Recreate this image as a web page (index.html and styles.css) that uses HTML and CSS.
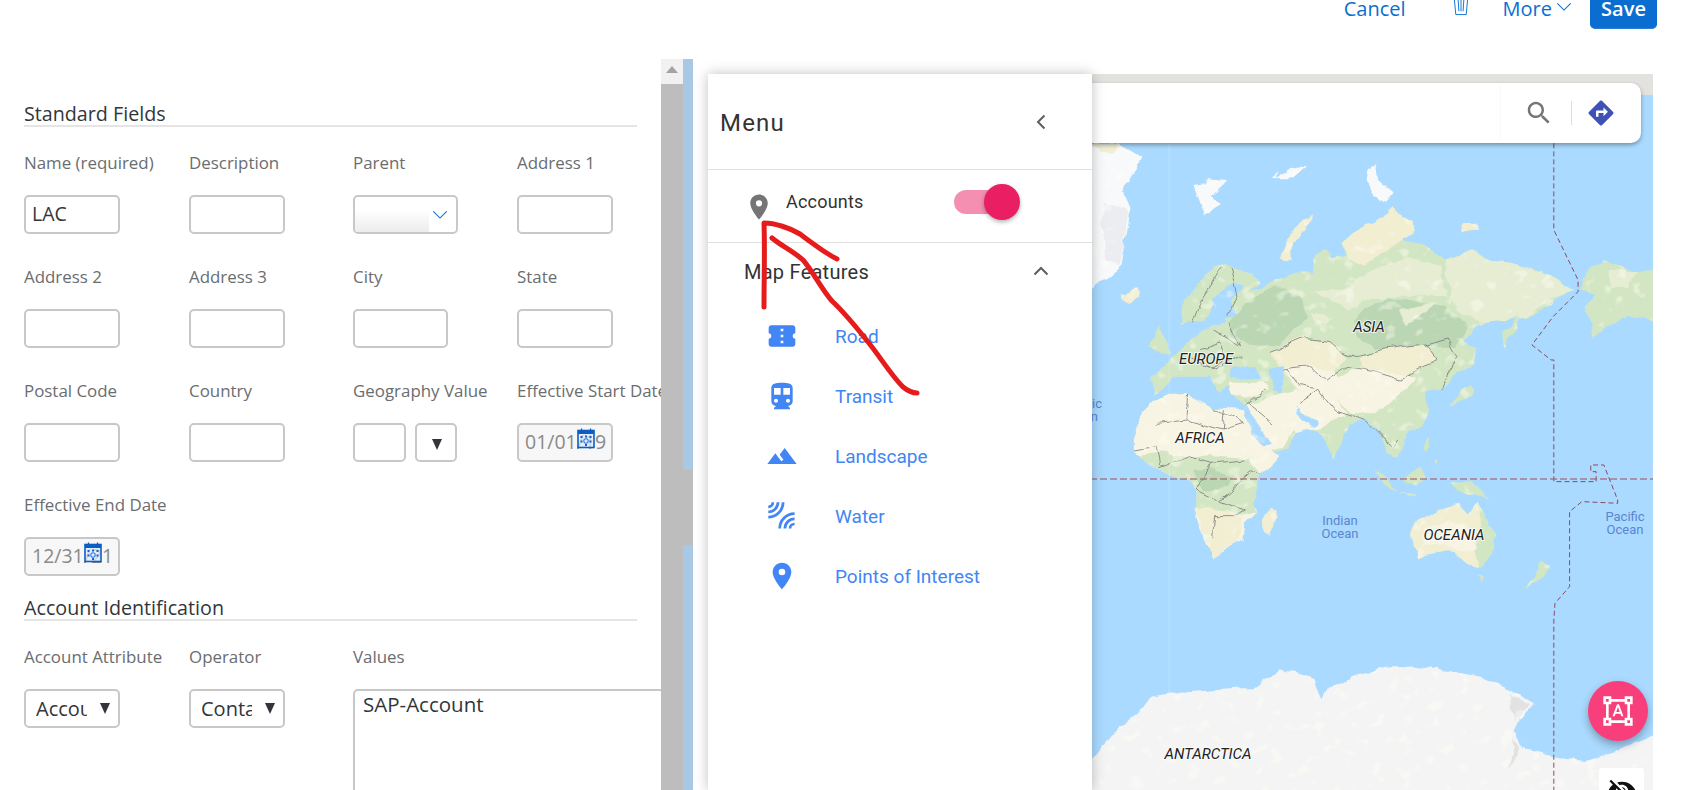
FILE: index.html
```html
<!DOCTYPE html>
<html lang="en">
<head>
<meta charset="utf-8">
<title>Territory</title>
<link rel="stylesheet" href="styles.css">
</head>
<body>
<header class="topbar">
  <a class="act cancel">Cancel</a>
  <svg class="trash" viewBox="0 0 16 18"><path d="M1 0.5 L2.5 16.5 H13.5 L15 0.5 M5 1 L5.8 13 M8 1 V13 M11 1 L10.2 13"/></svg>
  <a class="act more">More</a>
  <svg class="more-chev" viewBox="0 0 16 9"><path d="M0.5 0.5 L8 8 L15.5 0.5"/></svg>
  <button class="save">Save</button>
</header>
<main class="main">
  <section class="pane">
    <div class="form">
      <h2 class="sec">Standard Fields</h2>
      <div class="grid">
        <div class="cell"><div class="lab">Name (required)</div><div class="fld">LAC</div></div>
        <div class="cell"><div class="lab">Description</div><div class="fld"></div></div>
        <div class="cell"><div class="lab">Parent</div><div class="fld parent"><span class="fade"></span><svg class="pchev" viewBox="0 0 16 9"><path d="M0.5 0.5 L8 8 L15.5 0.5"/></svg></div></div>
        <div class="cell"><div class="lab">Address 1</div><div class="fld"></div></div>
        <div class="cell"><div class="lab">Address 2</div><div class="fld"></div></div>
        <div class="cell"><div class="lab">Address 3</div><div class="fld"></div></div>
        <div class="cell"><div class="lab">City</div><div class="fld city"></div></div>
        <div class="cell"><div class="lab">State</div><div class="fld"></div></div>
        <div class="cell"><div class="lab">Postal Code</div><div class="fld"></div></div>
        <div class="cell"><div class="lab">Country</div><div class="fld"></div></div>
        <div class="cell"><div class="lab">Geography Value</div><div class="geo"><div class="fld geo-a"></div><div class="fld geo-b"><span class="tri"></span></div></div></div>
        <div class="cell"><div class="lab">Effective Start Date</div><div class="fld date">01/01/19<svg class="cal" viewBox="0 0 18 20"><use href="#cal"/></svg></div></div>
        <div class="cell"><div class="lab">Effective End Date</div><div class="fld date">12/31/21<svg class="cal" viewBox="0 0 18 20"><use href="#cal"/></svg></div></div>
      </div>
      <h2 class="sec sec2">Account Identification</h2>
      <div class="grid">
        <div class="cell"><div class="lab">Account Attribute</div><div class="fld sel"><span class="clip">Account</span><span class="tri"></span></div></div>
        <div class="cell"><div class="lab">Operator</div><div class="fld sel"><span class="clip">Contains</span><span class="tri"></span></div></div>
        <div class="cell wide"><div class="lab">Values</div><div class="area">SAP-Account</div></div>
      </div>
    </div>
    <div class="sbar"><div class="sbar-top"><span class="sbar-arrow"></span></div><div class="sbar-thumb"></div></div>
  </section>
  <div class="strip"><div class="strip-thumb"></div></div>
  <section class="mapwrap">
    <div class="map">
      <svg class="mapsvg" viewBox="693 74 960 716" preserveAspectRatio="none">
        <defs>
          <filter id="rough" filterUnits="userSpaceOnUse" x="1080" y="74" width="573" height="716" color-interpolation-filters="sRGB">
            <feTurbulence type="fractalNoise" baseFrequency=".045" numOctaves="3" seed="4" result="n"/>
            <feDisplacementMap in="SourceGraphic" in2="n" scale="10" xChannelSelector="R" yChannelSelector="G" result="d"/>
            <feTurbulence type="fractalNoise" baseFrequency=".07 .09" numOctaves="2" seed="9" result="m"/>
            <feColorMatrix in="m" type="matrix" values="0 0 0 0 1  0 0 0 0 1  0 0 0 0 .96  7 0 0 0 -4.2" result="s"/>
            <feComposite in="s" in2="d" operator="in" result="sp"/>
            <feComponentTransfer in="sp" result="spf"><feFuncA type="linear" slope=".4"/></feComponentTransfer>
            <feMerge><feMergeNode in="d"/><feMergeNode in="spf"/></feMerge>
          </filter>
        </defs>
        <rect class="ocean" x="1080" y="74" width="573" height="716"/>
        <rect class="ice-top" x="1080" y="74" width="573" height="21"/>
        <g class="land">
        <g transform="translate(1080 70) scale(.3846 .3333)">
          <polygon class="snow" points="-60,220 105,225 165,265 130,330 110,350 130,430 120,500 105,590 30,660 -60,690"/>
          <polygon class="tan" points="30,225 105,222 85,250 50,255"/>
          <polygon class="snowd" points="60,400 125,430 115,520 100,590 65,570"/>
          <polygon class="tan" points="100,665 150,655 155,680 125,697 105,685"/>
          <polygon class="snow" points="295,345 330,340 335,325 382,330 365,360 340,375 365,405 350,415 325,437 310,390"/>
          <polygon class="snow" points="495,325 515,305 505,325 545,290 590,295 560,325 545,325"/>
          <polygon class="snow" points="745,300 770,285 775,330 815,370 790,402 760,372 740,340"/>
          <polygon class="tan" points="520,565 550,480 610,435 600,455 550,530 550,578"/>
          <polygon class="tan" points="995,460 1030,458 1035,480 1000,490"/>
          <polygon class="g2" points="262,755 268,710 300,660 330,610 375,578 415,600 462,640 440,665 470,655 500,625 570,600 605,612 610,560 635,535 650,565 690,555 680,520 710,490 790,440 810,415 860,450 862,490 840,510 900,525 950,572 1020,540 1080,570 1120,575 1180,595 1240,625 1285,660 1240,680 1225,710 1160,740 1110,745 1060,752 1030,772 1000,812 1015,825 1025,880 985,900 962,932 940,950 895,965 908,1020 890,1072 850,1085 835,1140 825,1165 800,1150 780,1092 745,1050 700,1060 662,1172 640,1120 610,1075 562,1090 540,1140 475,1145 430,1040 420,1000 385,975 380,940 360,970 330,920 240,920 190,975 185,925 220,885 250,850 290,800 345,770 380,760 350,700 325,760 300,760 280,750"/>
          <polygon class="tan" points="710,490 790,440 810,415 860,450 862,490 840,510 800,540 740,590 700,560 680,520"/>
          <polygon class="lite" points="950,572 1020,540 1080,570 1120,575 1180,595 1240,625 1285,660 1240,680 1160,740 1060,752 1000,740 960,680"/>
          <polygon class="lite" points="610,670 700,650 760,600 850,560 940,590 950,680 860,680 760,680 700,720"/>
          <polygon class="dark" points="390,755 440,690 510,645 570,680 590,740 550,790 520,830 430,820 395,800"/>
          <polygon class="dark" points="710,750 790,680 870,700 950,710 1010,770 985,830 900,830 830,850 770,840 720,800"/>
          <polygon class="lite" points="600,730 660,740 640,760 610,750"/>
          <polygon class="lite" points="830,720 930,700 910,720 850,760"/>
          <polygon class="lite" points="1000,660 1080,640 1060,700 1010,700"/>
          <polygon class="tan" points="494,850 580,805 650,815 700,860 660,900 600,890 530,900"/>
          <polygon class="tan2" points="530,895 600,885 660,900 700,950 660,985 690,1030 640,1060 600,1010 560,950"/>
          <polygon class="tan" points="728,860 790,840 900,825 930,870 895,885 830,930 770,910 730,900"/>
          <polygon class="tan2" points="650,940 710,900 800,910 870,920 830,970 770,1030 700,1030 660,985"/>
          <polygon class="tan2" points="385,935 470,935 490,960 430,985 385,975"/>
          <polygon class="tan2" points="430,1000 500,980 560,1075 525,1130 475,1145 440,1060"/>
          <polygon class="tan2" points="500,980 560,955 610,1010 640,1060 610,1075 562,1090"/>
          <polygon class="g2" points="800,1040 860,1010 908,1020 890,1072 850,1085 810,1070"/>
          <polygon class="water" points="350,700 345,680 400,640 425,650 395,690 405,740 380,750 360,740"/>
          <polygon class="water" points="395,895 450,885 470,925 420,925 390,920"/>
          <polygon class="water" points="495,895 530,885 530,970 505,960"/>
          <polygon class="water" points="420,1020 425,1000 500,1120 475,1130"/>
          <polygon class="water" points="560,1010 615,1050 605,1072 575,1040"/>
          <polygon class="g2" points="175,835 205,770 240,845 210,850"/>
          <polygon class="g2" points="1100,790 1140,730 1130,780 1105,845"/>
          <polygon class="g2" points="955,1010 1010,950 1020,970 1000,990 965,1005"/>
          <polygon class="g2" points="1015,825 1030,830 1025,880"/>
          <polygon class="g2" points="1310,625 1360,570 1440,600 1560,595 1560,790 1470,745 1420,735 1335,800 1315,710 1345,680 1300,660"/>
          <polygon class="lite" points="1370,600 1450,600 1430,650 1380,650"/>
          <polygon class="tan2" points="140,1085 180,1000 225,975 280,972 350,1015 420,1020 470,1125 518,1155 470,1222 450,1290 460,1325 430,1360 425,1410 345,1465 320,1410 300,1340 305,1280 285,1230 210,1195 170,1185 140,1140"/>
          <polygon class="g2" points="150,1160 215,1150 280,1165 340,1155 440,1165 470,1222 452,1295 458,1325 400,1340 300,1320 305,1280 285,1230 210,1195 170,1185"/>
          <polygon class="dark" points="290,1200 345,1195 395,1220 385,1250 320,1260"/>
          <polygon class="tan" points="300,1315 385,1325 425,1345 415,1410 345,1465 320,1410"/>
          <polygon class="tan" points="475,1350 500,1310 512,1320 505,1370 490,1395 478,1385"/>
          <polygon class="g2" points="765,1195 800,1220 825,1265 795,1245"/>
          <polygon class="g2" points="840,1220 885,1190 900,1225 870,1250 845,1240"/>
          <polygon class="g2" points="825,1270 865,1280 865,1270"/>
          <polygon class="g2" points="965,1230 1020,1235 1065,1290 1000,1275"/>
          <polygon class="g2" points="895,1130 905,1105 912,1140 900,1145"/>
          <polygon class="g2" points="920,1175 930,1165 932,1185"/>
          <polygon class="tan" points="862,1380 880,1350 930,1320 985,1305 1010,1335 1030,1300 1050,1345 1082,1390 1070,1455 1040,1495 1000,1475 960,1440 900,1455 880,1465 868,1430"/>
          <polygon class="tan2" points="895,1380 960,1350 1030,1380 1030,1440 990,1450 950,1420 900,1425"/>
          <polygon class="g2" points="1030,1300 1050,1345 1082,1390 1070,1455 1045,1495 1030,1440 1040,1380"/>
          <polygon class="g2" points="1040,1515 1055,1515 1048,1535"/>
          <polygon class="g2" points="1195,1475 1220,1495 1210,1515 1160,1560 1180,1525"/>
          <polygon class="ice" points="-60,2090 30,2070 100,1970 170,1910 190,1880 240,1870 420,1855 450,1855 520,1795 610,1825 630,1890 660,1840 780,1795 855,1790 960,1800 1050,1820 1120,1860 1180,1900 1130,1980 1150,2040 1230,2060 1320,2070 1400,2040 1560,1960 1560,2300 -60,2300"/>
          <polygon class="iced" points="1120,1870 1170,1905 1135,1960 1120,1920"/>
          <polygon class="iced" points="1125,2000 1145,2040 1110,2100 1130,2040"/>
          <g class="bord">
            <polyline points="370,590 320,680 295,760"/>
            <polyline points="390,590 410,690 380,740"/>
            <polyline points="350,780 420,830 390,760"/>
            <polyline points="290,870 350,900 420,860"/>
            <polyline points="310,830 360,810 380,870 340,900"/>
            <polyline points="494,850 540,830 590,805 650,815 680,845 720,860 790,840 900,825 930,870 895,885 830,930 770,910 730,900"/>
            <polyline points="530,900 600,890 640,930 690,890 730,900"/>
            <polyline points="570,1000 620,960 660,1020 740,1050 800,1120"/>
            <polyline points="540,900 570,950 620,960"/>
            <polyline points="430,990 470,1030 500,1060"/>
            <polyline points="430,1000 480,960"/>
            <polyline points="200,1060 280,1050 285,975"/>
            <polyline points="280,1050 370,1080 425,1060 350,1015"/>
            <polyline points="370,1080 375,1020"/>
            <polyline points="140,1140 200,1130 210,1190 280,1160 340,1180 430,1170"/>
            <polyline points="340,1180 300,1260 360,1290 430,1320 400,1340 350,1340 345,1400"/>
            <polyline points="360,1290 440,1210 470,1222"/>
            <polyline points="780,1090 810,1130 830,1110"/>
            <polyline points="895,830 960,810 985,860 940,950"/>
          </g>
        </g>
        </g>
        <g transform="translate(1080 70) scale(.3846 .3333)">
          <line class="seam" x1="232" y1="220" x2="232" y2="2160"/>
          <polyline class="idl" points="1232,220 1232,480 1295,630 1295,665 1230,740 1175,825 1225,870 1232,870 1232,1235 1342,1235 1342,1205 1328,1205 1328,1185 1362,1185 1398,1290 1398,1300 1305,1295 1273,1325 1273,1550 1235,1600 1232,1650 1232,2160"/>
          <line class="equator" x1="0" y1="1227" x2="1490" y2="1227"/>
        </g>
        <text class="cont" x="1369" y="332">ASIA</text>
        <text class="cont" x="1206" y="364">EUROPE</text>
        <text class="cont" x="1200" y="443">AFRICA</text>
        <text class="cont" x="1454" y="540">OCEANIA</text>
        <text class="cont" x="1208" y="759">ANTARCTICA</text>
        <text class="sea" x="1340" y="525">Indian</text>
        <text class="sea" x="1340" y="538">Ocean</text>
        <text class="sea" x="1625" y="521">Pacific</text>
        <text class="sea" x="1625" y="534">Ocean</text>
        <text class="sea endt" x="1102" y="408">Atlantic</text>
        <text class="sea endt" x="1098" y="421">Ocean</text>
      </svg>
      <div class="search">
        <span class="seamv"></span>
        <svg class="sicon" viewBox="0 0 24 24"><path d="M15.5 14h-.79l-.28-.27C15.41 12.59 16 11.11 16 9.5 16 5.91 13.09 3 9.5 3S3 5.91 3 9.5 5.91 16 9.5 16c1.61 0 3.09-.59 4.23-1.57l.27.28v.79l5 4.99L20.49 19l-4.99-5zm-6 0C7.01 14 5 11.99 5 9.5S7.01 5 9.5 5 14 7.01 14 9.5 11.99 14 9.5 14z"/></svg>
        <span class="sdiv"></span>
        <svg class="dicon" viewBox="0 0 24 24"><path d="M21.71 11.29l-9-9c-.39-.39-1.02-.39-1.41 0l-9 9c-.39.39-.39 1.02 0 1.41l9 9c.39.39 1.02.39 1.41 0l9-9c.39-.38.39-1.01 0-1.41zM14 14.5V12h-4v3H8v-4c0-.55.45-1 1-1h5V7.5l3.5 3.5-3.5 3.5z"/></svg>
      </div>
      <button class="fab"><svg viewBox="0 0 24 24"><path d="M23 7V1h-6v2H7V1H1v6h2v10H1v6h6v-2h10v2h6v-6h-2V7h2zM3 3h2v2H3V3zm2 18H3v-2h2v2zm12-2H7v-2H5V7h2V5h10v2h2v10h-2v2zm4 2h-2v-2h2v2zM19 5V3h2v2h-2zm-5.27 9h-3.49l-.73 2H7.89l3.4-9h1.4l3.41 9h-1.63l-.74-2zm-3.04-1.26h2.61L12 8.91l-1.31 3.83z"/></svg></button>
      <button class="eye"><svg viewBox="0 0 24 24"><path d="M12 7c2.76 0 5 2.24 5 5 0 .65-.13 1.26-.36 1.83l2.92 2.92c1.51-1.26 2.7-2.89 3.43-4.75-1.73-4.39-6-7.5-11-7.5-1.4 0-2.74.25-3.98.7l2.16 2.16C10.74 7.13 11.35 7 12 7zM2 4.27l2.28 2.28.46.46C3.08 8.3 1.78 10.02 1 12c1.73 4.39 6 7.5 11 7.5 1.55 0 3.03-.3 4.38-.84l.42.42L19.73 22 21 20.73 3.27 3 2 4.27zM7.53 9.8l1.55 1.55c-.05.21-.08.43-.08.65 0 1.66 1.34 3 3 3 .22 0 .44-.03.65-.08l1.55 1.55c-.67.33-1.41.53-2.2.53-2.76 0-5-2.24-5-5 0-.79.2-1.53.53-2.2zm4.31-.78l3.15 3.15.02-.16c0-1.66-1.34-3-3-3l-.17.01z"/></svg></button>
    </div>
    <aside class="menu">
      <div class="mhead"><span class="mtitle">Menu</span><svg class="mchev" viewBox="0 0 10 16"><path d="M8.5 1.5 L2 8 L8.5 14.5"/></svg></div>
      <div class="maccts">
        <svg class="apin" viewBox="0 0 24 24"><path d="M12 2C8.13 2 5 5.13 5 9c0 5.25 7 13 7 13s7-7.75 7-13c0-3.87-3.13-7-7-7zm0 9.5a2.5 2.5 0 0 1 0-5 2.5 2.5 0 0 1 0 5z"/></svg>
        <span class="atext">Accounts</span>
        <span class="toggle"><span class="knob"></span></span>
      </div>
      <div class="mfeat"><span class="mfeat-t">Map Features</span><svg class="fchev" viewBox="0 0 16 10"><path d="M1.5 8.5 L8 2 L14.5 8.5"/></svg></div>
      <ul class="mlist">
        <li><svg class="ic" viewBox="0 0 24 24"><path d="M20 12c0-1.1.9-2 2-2V6c0-1.1-.9-2-2-2H4c-1.1 0-2 .9-2 2v4c1.1 0 2 .9 2 2s-.9 2-2 2v4c0 1.1.9 2 2 2h16c1.1 0 2-.9 2-2v-4c-1.1 0-2-.9-2-2z"/><path class="dots" d="M11 6.5h2v2h-2zM11 11h2v2h-2zM11 15.5h2v2h-2z"/></svg>Road</li>
        <li><svg class="ic" viewBox="0 0 24 24"><path d="M12 2c-4.42 0-8 .5-8 4v10c0 1.93 1.57 3.5 3.5 3.5L6 21v1h12v-1l-1.5-1.5c1.93 0 3.5-1.57 3.5-3.5V6c0-3.5-3.58-4-8-4zM7.5 17c-.83 0-1.5-.67-1.5-1.5S6.67 14 7.5 14s1.5.67 1.5 1.5S8.33 17 7.5 17zm3.5-6H6V6h5v5zm5.5 6c-.83 0-1.5-.67-1.5-1.5s.67-1.5 1.5-1.5 1.5.67 1.5 1.5-.67 1.5-1.5 1.5zm1.5-6h-5V6h5v5z"/></svg>Transit</li>
        <li><svg class="ic" viewBox="0 0 24 24"><path d="M14 6l-3.75 5 2.85 3.8-1.6 1.2C9.81 13.75 7 10 7 10l-6 8h22L14 6z"/></svg>Landscape</li>
        <li><svg class="ic wat" viewBox="-2 -2 28 28"><path d="M4 0A4 4 0 0 1 0 4M8.5 0A8.5 8.5 0 0 1 0 8.5M13 0A13 13 0 0 1 0 13M19 23A4 4 0 0 1 23 19M14.5 23A8.5 8.5 0 0 1 23 14.5M10 23A13 13 0 0 1 23 10"/></svg>Water</li>
        <li><svg class="ic" viewBox="0 0 24 24"><path d="M12 2C8.13 2 5 5.13 5 9c0 5.25 7 13 7 13s7-7.75 7-13c0-3.87-3.13-7-7-7zm0 9.5a2.5 2.5 0 0 1 0-5 2.5 2.5 0 0 1 0 5z"/></svg>Points of Interest</li>
      </ul>
    </aside>
    <svg class="scribble" viewBox="693 59 960 731" preserveAspectRatio="none">
      <path d="M764 307 C764 280 765 250 764 223 C775 223 790 228 800 234 C812 243 825 253 837 259"/>
      <path d="M772 238 C780 245 793 251 803 260 C812 270 822 290 832 301 C848 316 860 332 872 347 C882 360 892 376 903 387 C908 391 912 393 917 393"/>
    </svg>
  </section>
</main>
<svg class="defs" aria-hidden="true"><defs><g id="cal"><rect x="1" y="2" width="16" height="17" fill="#dfeafa" fill-opacity=".75" stroke="#0a5fc4" stroke-width="1.6"/><rect x="1" y="2" width="16" height="3.5" fill="#0a5fc4"/><path d="M4.5 0v3M13.5 0v3" stroke="#0a5fc4" stroke-width="1.3"/><circle cx="9" cy="12.5" r="2.2" fill="none" stroke="#2f7ed8" stroke-width="1.1"/><path d="M3.5 7.5h2v2h-2zM8 7h2v2H8zM12.5 7.5h2v2h-2zM3.5 12h2v2h-2zM12.5 12h2v2h-2zM8 15.5h2v2H8z" fill="#1560c8"/></g></defs></svg>
</body>
</html>
```

FILE: styles.css
```css
* { box-sizing: border-box; }
html, body { height: 100%; }
body {
  margin: 0;
  height: 790px;
  overflow: hidden;
  background: #fff;
  font-family: "Open Sans", "Liberation Sans", sans-serif;
  color: #32363a;
  display: flex;
  flex-direction: column;
}
.topbar {
  height: 59px;
  flex: none;
  display: flex;
  align-items: flex-start;
  justify-content: flex-end;
  padding-right: 26px;
  overflow: hidden;
}
.act { color: #0a6ed1; font-size: 20px; line-height: 24px; margin-top: -3px; }
.cancel { margin-right: 47px; }
.trash { width: 16px; height: 17px; margin-right: 34px; margin-top: -1px; }
.trash path { fill: none; stroke: #0a6ed1; stroke-width: 1; }
.more { margin-right: 4px; }
.more-chev { width: 16px; height: 8px; margin-top: 3px; margin-right: 18px; }
.more-chev path, .pchev path { fill: none; stroke: #0a6ed1; stroke-width: 1.2; }
.save {
  width: 67px;
  height: 36px;
  margin-top: -7px;
  border: 1px solid #0a6ed1;
  border-bottom-color: #2b7fd4;
  border-radius: 5px;
  background: #0a6ed1;
  color: #fff;
  font: 600 20px/26px "Open Sans", sans-serif;
  padding: 0 0 4px;
}
.main { flex: 1; display: flex; min-height: 0; }
.pane { width: 683px; flex: none; display: flex; }
.form { width: 661px; flex: none; padding: 44px 0 0 24px; overflow: hidden; }
.sec {
  margin: 0;
  width: 613px;
  height: 24px;
  border-bottom: 2px solid #e5e5e5;
  font-size: 19.7px;
  font-weight: 400;
  line-height: 21px;
  white-space: nowrap;
}
.sec2 { margin-top: 20px; height: 25px; line-height: 23px; }
.grid {
  display: grid;
  grid-template-columns: 165px 164px 164px 164px;
  row-gap: 33px;
  margin-top: 26px;
}
.lab {
  height: 20px;
  font-size: 16.9px;
  line-height: 20px;
  color: #6a6d70;
  white-space: nowrap;
  margin-bottom: 22px;
}
.fld {
  position: relative;
  width: 96px;
  height: 39px;
  border: 2px solid #c8c8c8;
  border-radius: 5px;
  background: #fff;
  padding-left: 6px;
  font-size: 19.5px;
  line-height: 34px;
  overflow: hidden;
  white-space: nowrap;
}
.parent { width: 105px; }
.city { width: 95px; }
.fade {
  position: absolute;
  left: 0;
  bottom: 0;
  width: 74px;
  height: 22px;
  background: linear-gradient(#fff, #ececec);
}
.pchev { position: absolute; right: 8px; top: 14px; width: 16px; height: 8px; }
.geo { display: flex; gap: 9px; }
.geo-a { width: 53px; }
.geo-b { width: 42px; }
.geo-b .tri { position: absolute; right: 13px; top: 14px; }
.tri {
  width: 0;
  height: 0;
  border-left: 5px solid transparent;
  border-right: 5px solid transparent;
  border-top: 11px solid #32363a;
}
.date { background: #f7f7f7; color: #8a8a8a; }
.cal { position: absolute; left: 58px; top: 3px; width: 18px; height: 21px; }
.sel { display: flex; align-items: center; padding-left: 10px; font-size: 20px; }
.clip { width: 51px; overflow: hidden; flex: none; }
.sel .tri { margin-left: 13px; flex: none; }
.wide { width: 307px; }
.area {
  width: 340px;
  height: 120px;
  border: 2px solid #c8c8c8;
  border-radius: 5px 0 0 0;
  padding: 0 8px;
  font-size: 20.5px;
  line-height: 26px;
  white-space: nowrap;
}
.sbar { width: 22px; flex: none; background: #bdbdbd; }
.sbar-top { height: 25px; background: #f1f1f1; display: flex; justify-content: center; padding-top: 7px; }
.sbar-arrow {
  width: 0;
  height: 0;
  border-left: 6px solid transparent;
  border-right: 6px solid transparent;
  border-bottom: 7px solid #a3a3a3;
}
.strip { width: 10px; flex: none; background: #a9c8e6; padding-top: 411px; }
.strip-thumb { height: 75px; background: #bdbdbd; }
.mapwrap { position: relative; width: 960px; flex: none; padding-top: 15px; }
.map { position: relative; width: 960px; height: 716px; overflow: hidden; }
.mapsvg { display: block; width: 960px; height: 716px; }
.ocean { fill: #aadaff; }
.ice-top { fill: #e3e2de; }
.land { filter: url(#rough); }
.snow { fill: #f8f9fb; }
.snowd { fill: #ebedf0; }
.tan { fill: #f1eed2; }
.tan2 { fill: #f8f4e3; }
.g2 { fill: #d3e6c3; }
.lite { fill: #e6edd3; }
.dark { fill: #bad6b3; }
.water { fill: #aadaff; }
.ice { fill: #f4f4f4; }
.iced { fill: #e2e2e2; }
.bord polyline { fill: none; stroke: #77797a; stroke-width: .8; vector-effect: non-scaling-stroke; }
.seam { stroke: rgba(255, 255, 255, .25); stroke-width: 1; vector-effect: non-scaling-stroke; }
.idl { fill: none; stroke: #8d4a5d; stroke-width: 1; stroke-dasharray: 5 3; vector-effect: non-scaling-stroke; }
.equator { stroke: #a05c68; stroke-opacity: .75; stroke-width: 1.5; stroke-dasharray: 7 3; vector-effect: non-scaling-stroke; }
.cont {
  font: italic 400 15px Roboto, sans-serif;
  fill: #222;
  text-anchor: middle;
  paint-order: stroke;
  stroke: rgba(255, 255, 255, .7);
  stroke-width: 2px;
}
.sea { font: 400 13px Roboto, sans-serif; fill: #5c85d0; text-anchor: middle; }
.endt { text-anchor: end; }
.search {
  position: absolute;
  left: 300px;
  right: 12px;
  top: 9px;
  height: 60px;
  background: #fff;
  border-radius: 10px;
  box-shadow: 0 2px 4px rgba(0, 0, 0, .35);
  display: flex;
  align-items: center;
  justify-content: flex-end;
  padding-right: 25px;
}
.seamv { position: absolute; left: 507px; top: 2px; bottom: 2px; width: 1px; background: #f9f9f9; }
.sicon { width: 30px; height: 30px; fill: #757575; margin-right: 17px; }
.sdiv { width: 1px; height: 24px; background: #dcdcdc; margin-right: 14px; }
.dicon { width: 30px; height: 30px; fill: #3f51b5; }
.fab {
  position: absolute;
  left: 895px;
  top: 607px;
  width: 60px;
  height: 60px;
  border: 0;
  border-radius: 50%;
  background: #f93e7c;
  box-shadow: 0 4px 8px rgba(0, 0, 0, .3);
  padding: 14px;
}
.fab svg { display: block; width: 32px; height: 32px; fill: #fff; }
.eye {
  position: absolute;
  left: 906px;
  top: 694px;
  width: 45px;
  height: 45px;
  border: 0;
  border-radius: 3px;
  background: #fff;
  padding: 8px;
}
.eye svg { display: block; width: 30px; height: 30px; fill: #111; }
.menu {
  position: absolute;
  left: 15px;
  top: 15px;
  bottom: 0;
  width: 384px;
  background: #fff;
  box-shadow: 0 0 12px rgba(0, 0, 0, .25);
  font-family: Roboto, sans-serif;
  color: #333;
}
.mhead {
  height: 96px;
  border-bottom: 1px solid #e0e0e0;
  display: flex;
  align-items: center;
  justify-content: space-between;
  padding: 0 46px 0 12px;
}
.mtitle { font-size: 24px; letter-spacing: 1.2px; margin-top: 3px; }
.mchev { width: 10px; height: 16px; }
.mchev path, .fchev path { fill: none; stroke: #5f5f5f; stroke-width: 2; }
.maccts {
  position: relative;
  height: 73px;
  border-bottom: 1px solid #e0e0e0;
  padding-left: 36px;
  display: flex;
  align-items: flex-start;
}
.apin { width: 30px; height: 30px; fill: #757575; margin-top: 22px; }
.atext { font-size: 18px; line-height: 22px; margin: 21px 0 0 12px; letter-spacing: .2px; }
.toggle {
  position: absolute;
  left: 246px;
  top: 20px;
  width: 50px;
  height: 24px;
  border-radius: 12px;
  background: #f48fb1;
}
.knob {
  position: absolute;
  left: 30px;
  top: -6px;
  width: 36px;
  height: 36px;
  border-radius: 50%;
  background: #e91e63;
  box-shadow: 0 2px 4px rgba(0, 0, 0, .3);
}
.mfeat {
  height: 56px;
  display: flex;
  align-items: center;
  justify-content: space-between;
  padding: 0 43px 0 36px;
  font-size: 20px;
  letter-spacing: .25px;
}
.mfeat-t { margin-top: 2px; }
.fchev { width: 16px; height: 10px; }
.mlist { list-style: none; margin: 0; padding: 7px 0 0 58px; }
.mlist li {
  height: 60px;
  display: flex;
  align-items: center;
  font-size: 19px;
  color: #4285f4;
}
.ic { width: 32px; height: 32px; fill: #4285f4; margin-right: 37px; flex: none; }
.dots { fill: #fff; }
.wat { fill: none; stroke: #4285f4; stroke-width: 2.4; }
.scribble {
  position: absolute;
  left: 0;
  top: 0;
  width: 960px;
  height: 731px;
  pointer-events: none;
  overflow: visible;
}
.scribble path { fill: none; stroke: #e61c1c; stroke-width: 5; stroke-linecap: round; stroke-linejoin: round; }
.defs { position: absolute; width: 0; height: 0; }
```
